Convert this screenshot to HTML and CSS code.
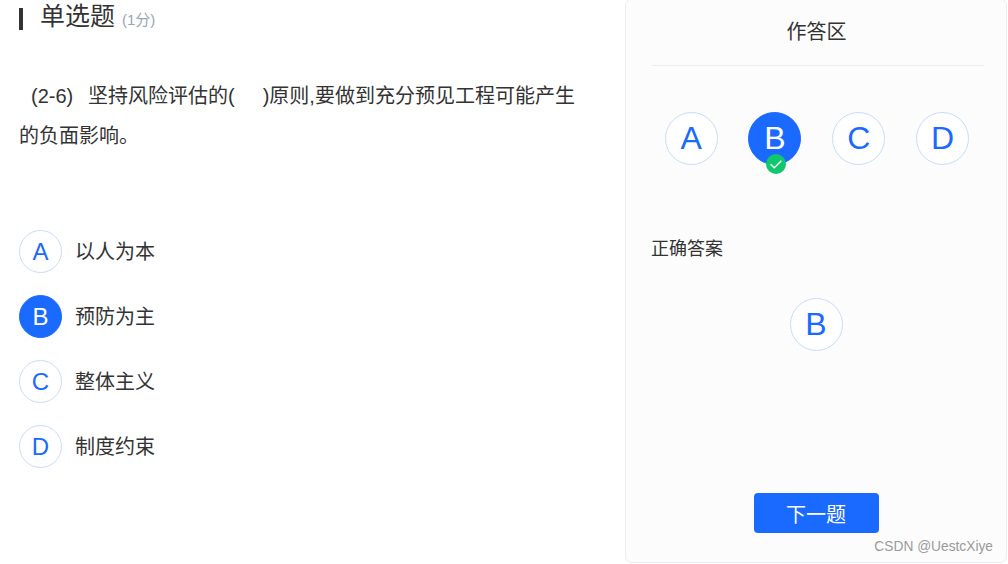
FILE: index.html
```html
<!DOCTYPE html>
<html lang="zh-CN">
<head>
<meta charset="utf-8">
<title>单选题</title>
<link rel="stylesheet" href="styles.css">
</head>
<body>
<div class="page">
  <main class="question">
    <h1 class="q-title"><span class="q-bar"></span><span class="q-name">单选题</span><span class="q-score">(1分)</span></h1>
    <p class="q-text"><span class="q-no">(2-6)</span>坚持风险评估的(<span class="q-blank"></span>)原则,要做到充分预见工程可能产生<br>的负面影响。</p>
    <ul class="options">
      <li class="option"><span class="opt-mark">A</span><span class="opt-text">以人为本</span></li>
      <li class="option"><span class="opt-mark selected">B</span><span class="opt-text">预防为主</span></li>
      <li class="option"><span class="opt-mark">C</span><span class="opt-text">整体主义</span></li>
      <li class="option"><span class="opt-mark">D</span><span class="opt-text">制度约束</span></li>
    </ul>
  </main>
  <aside class="panel">
    <h2 class="panel-title">作答区</h2>
    <div class="answers">
      <span class="ans-mark">A</span>
      <span class="ans-mark selected">B
        <svg class="tick" viewBox="0 0 20 20" aria-hidden="true"><circle cx="10" cy="10" r="10" fill="#10c76e"/><path d="M4.6 10.2l3.7 3.6 7-7" fill="none" stroke="#fff" stroke-width="1.3"/></svg>
      </span>
      <span class="ans-mark">C</span>
      <span class="ans-mark">D</span>
    </div>
    <div class="right-label">正确答案</div>
    <div class="right-row"><span class="ans-mark">B</span></div>
    <button class="next" type="button">下一题</button>
  </aside>
  <div class="watermark">CSDN @UestcXiye</div>
</div>
</body>
</html>
```
FILE: styles.css
```css
* { box-sizing: border-box; }
html, body { margin: 0; padding: 0; height: 100%; overflow: hidden; background: #fff; }
body { font-family: "Liberation Sans", "Noto Sans CJK SC", sans-serif; color: #333; }
.page { position: relative; display: flex; width: 1008px; height: 564px; }
.question { width: 625px; padding: 0 30px 0 19px; flex: none; }
.q-title { display: flex; align-items: center; margin: 4px 0 0; height: 28px; font-weight: 400; }
.q-bar { width: 4px; height: 22px; margin-top: 1px; background: #333; margin-right: 17px; }
.q-name { font-size: 25px; line-height: 28px; margin-top: -4px; color: #333; }
.q-score { font-size: 15px; color: #9aa5b5; margin-left: 7px; }
.q-text { margin: 44px 0 0; width: 560px; font-size: 20px; line-height: 40px; color: #333; }
.q-no { display: inline-block; width: 69px; padding-left: 12px; }
.q-blank { display: inline-block; width: 28px; }
.options { list-style: none; margin: 74px 0 0; padding: 0; display: flex; flex-direction: column; gap: 22px; }
.option { display: flex; align-items: center; gap: 13px; font-size: 20px; height: 43px; color: #333; }
.opt-text { margin-top: -2px; }
.opt-mark { width: 43px; height: 43px; border-radius: 50%; border: 1px solid #c9dbfb; background: #fff; color: #1a6aff; font-size: 24px; display: flex; align-items: center; justify-content: center; }
.opt-mark.selected { background: #1a6aff; border-color: #1a6aff; color: #fff; }
.panel { display: flex; flex-direction: column; flex: none; width: 382px; height: 564px; margin-top: -1px; padding: 0 22px 29px 26px; background: #fcfcfd; border: 1px solid #eceef0; border-radius: 6px; }
.panel-title { margin: 0; height: 66px; padding: 18px 3px 0 0; font-size: 20px; line-height: 28px; font-weight: 400; text-align: center; color: #333; border-bottom: 1px solid #eceef0; }
.answers { display: flex; justify-content: space-between; margin-top: 46px; padding: 0 15px 0 12.7px; }
.ans-mark { position: relative; width: 53px; height: 53px; border-radius: 50%; border: 1px solid #c9dbfb; background: #fff; color: #1a6aff; font-size: 32px; display: flex; align-items: center; justify-content: center; }
.ans-mark.selected { background: #1a6aff; border-color: #1a6aff; color: #fff; }
.tick { position: absolute; left: 17px; bottom: -10px; width: 20px; height: 20px; }
.right-label { margin: 71px 0 0 -1px; font-size: 18px; line-height: 26px; color: #333; }
.right-row { display: flex; justify-content: center; margin: 36px 4px 0 0; }
.next { align-self: center; margin: auto 4px 0 0; width: 125px; height: 40px; border: 0; border-radius: 4px; background: #1a6aff; color: #fff; font: inherit; font-size: 20px; }
.watermark { position: absolute; right: 15px; bottom: 9px; font-size: 13.75px; line-height: 16px; color: #9a9a9a; }
```
